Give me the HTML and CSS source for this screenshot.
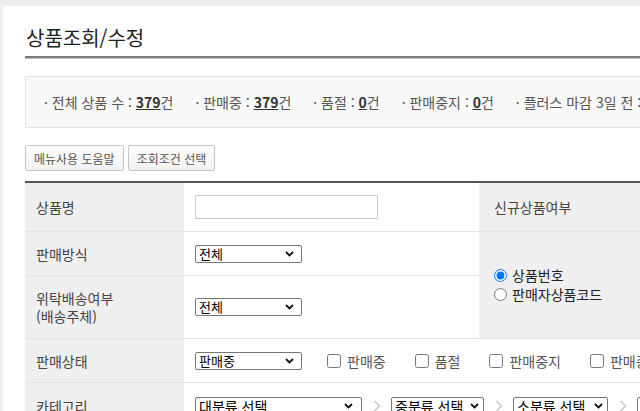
FILE: index.html
```html
<!DOCTYPE html>
<html lang="ko">
<head>
  <meta charset="UTF-8" />
  <meta name="viewport" content="width=device-width, initial-scale=1.0"/>
  <title>상품조회/수정</title>
  <link rel="stylesheet" href="styles.css">
</head>
<body>
  <div class="page">
    <h1 class="page-title">상품조회/수정</h1>

    <div class="summary">
      <span class="sum-item">· 전체 상품 수 : <a class="num">379</a>건</span>
      <span class="sum-item">· 판매중 : <a class="num">379</a>건</span>
      <span class="sum-item">· 품절 : <a class="num">0</a>건</span>
      <span class="sum-item">· 판매중지 : <a class="num">0</a>건</span>
      <span class="sum-item">· 플러스 마감 3일 전 : <a class="num">0</a>건</span>
    </div>

    <div class="btn-row">
      <button class="btn">메뉴사용 도움말</button>
      <button class="btn">조회조건 선택</button>
    </div>

    <table class="search">
      <colgroup>
        <col class="c-label">
        <col class="c-value">
        <col class="c-label2">
        <col>
      </colgroup>
      <tr class="r1">
        <th>상품명</th>
        <td><input type="text" class="txt"></td>
        <th class="lbl2">신규상품여부</th>
        <td></td>
      </tr>
      <tr class="r2">
        <th>판매방식</th>
        <td>
          <div class="sel sel-a" role="combobox"><span class="sel-txt">전체</span><svg class="caret" width="9" height="6" viewBox="0 0 9 6"><polyline points="1,1 4.5,4.5 8,1" fill="none" stroke="#111" stroke-width="1.8"/></svg></div>
        </td>
        <th rowspan="2" class="lbl2 radio-cell">
          <label class="radio-opt"><input type="radio" name="code" checked> 상품번호</label>
          <label class="radio-opt"><input type="radio" name="code"> 판매자상품코드</label>
        </th>
        <td rowspan="2"></td>
      </tr>
      <tr class="r3">
        <th>위탁배송여부<br>(배송주체)</th>
        <td>
          <div class="sel sel-a" role="combobox"><span class="sel-txt">전체</span><svg class="caret" width="9" height="6" viewBox="0 0 9 6"><polyline points="1,1 4.5,4.5 8,1" fill="none" stroke="#111" stroke-width="1.8"/></svg></div>
        </td>
      </tr>
      <tr class="r4">
        <th>판매상태</th>
        <td colspan="3">
          <div class="line">
            <div class="sel sel-a" role="combobox"><span class="sel-txt">판매중</span><svg class="caret" width="9" height="6" viewBox="0 0 9 6"><polyline points="1,1 4.5,4.5 8,1" fill="none" stroke="#111" stroke-width="1.8"/></svg></div>
            <label class="chk chk-first"><input type="checkbox"> 판매중</label>
            <label class="chk"><input type="checkbox"> 품절</label>
            <label class="chk"><input type="checkbox"> 판매중지</label>
            <label class="chk"><input type="checkbox"> 판매종료</label>
          </div>
        </td>
      </tr>
      <tr class="r5">
        <th>카테고리</th>
        <td colspan="3">
          <div class="line">
            <div class="sel sel-cat sel-b" role="combobox"><span class="sel-txt">대분류 선택</span><svg class="caret" width="9" height="6" viewBox="0 0 9 6"><polyline points="1,1 4.5,4.5 8,1" fill="none" stroke="#111" stroke-width="1.8"/></svg></div>
            <svg class="arr" width="8" height="12" viewBox="0 0 8 12"><polyline points="1.5,1 6.5,6 1.5,11" fill="none" stroke="#c4c4c4" stroke-width="1.3"/></svg>
            <div class="sel sel-cat sel-c" role="combobox"><span class="sel-txt">중분류 선택</span><svg class="caret" width="9" height="6" viewBox="0 0 9 6"><polyline points="1,1 4.5,4.5 8,1" fill="none" stroke="#111" stroke-width="1.8"/></svg></div>
            <svg class="arr" width="8" height="12" viewBox="0 0 8 12"><polyline points="1.5,1 6.5,6 1.5,11" fill="none" stroke="#c4c4c4" stroke-width="1.3"/></svg>
            <div class="sel sel-cat sel-d" role="combobox"><span class="sel-txt">소분류 선택</span><svg class="caret" width="9" height="6" viewBox="0 0 9 6"><polyline points="1,1 4.5,4.5 8,1" fill="none" stroke="#111" stroke-width="1.8"/></svg></div>
            <svg class="arr" width="8" height="12" viewBox="0 0 8 12"><polyline points="1.5,1 6.5,6 1.5,11" fill="none" stroke="#c4c4c4" stroke-width="1.3"/></svg>
            <div class="sel sel-cat sel-d" role="combobox"><span class="sel-txt">세분류 선택</span><svg class="caret" width="9" height="6" viewBox="0 0 9 6"><polyline points="1,1 4.5,4.5 8,1" fill="none" stroke="#111" stroke-width="1.8"/></svg></div>
          </div>
        </td>
      </tr>
    </table>
  </div>
</body>
</html>
```

FILE: styles.css
```css
html, body {
  overflow: hidden;
}
body {
  margin: 0;
  background: #eeeeee;
  font-family: "Noto Sans CJK KR", "Noto Sans", sans-serif;
  color: #333;
}
.page {
  margin: 6px 0 0 3px;
  background: #fff;
  padding: 0 22px 40px;
  width: 1000px;
}
.page-title {
  margin: 0;
  padding: 19px 0 6px 1px;
  font-size: 20px;
  line-height: 25px;
  font-weight: normal;
  color: #222;
  border-bottom: 2px solid #7b7b7b;
  box-shadow: 0 1px 0 #c4c4c4;
}

/* summary box */
.summary {
  margin-top: 18px;
  height: 50px;
  line-height: 50px;
  border: 1px solid #e2e2e2;
  background: #f8f8f8;
  padding: 0 18px;
  font-size: 14px;
  color: #555;
  white-space: nowrap;
}
.sum-item {
  margin-right: 18px;
}
.num {
  font-weight: bold;
  text-decoration: underline;
  color: #333;
}

/* buttons */
.btn-row {
  margin-top: 17px;
  display: flex;
  gap: 4px;
}
.btn {
  height: 26px;
  padding: 0 8px;
  font-family: inherit;
  font-size: 12px;
  color: #555;
  background: linear-gradient(#ffffff, #f1f1f1);
  border: 1px solid #c4c4c4;
  border-radius: 2px;
}

/* search table */
.search {
  margin-top: 10px;
  border-collapse: collapse;
  border-top: 2px solid #555;
  width: 900px;
  table-layout: fixed;
  font-size: 14px;
}
.c-label { width: 159px; }
.c-value { width: 295px; }
.c-label2 { width: 170px; }
.search th {
  background: #efefef;
  font-weight: normal;
  text-align: left;
  padding: 0 11px;
  color: #444;
  line-height: 18px;
  border-bottom: 1px solid #e2e2e2;
}
.search td {
  padding: 0 11px;
  border-bottom: 1px solid #e2e2e2;
}
.search th.lbl2 {
  padding-left: 15px;
}
.r1 th { height: 48px; }
.r2 th { height: 43px; }
.r3 th { height: 62px; }
.r4 th { height: 43px; }
.r5 th { height: 45px; }

.txt {
  box-sizing: border-box;
  width: 183px;
  height: 24px;
  border: 1px solid #ccc;
  margin: 0;
}

/* drop-down boxes */
.sel {
  box-sizing: border-box;
  display: flex;
  align-items: center;
  justify-content: space-between;
  height: 18px;
  padding: 0 7px 0 3px;
  border: 1px solid #767676;
  border-radius: 2px;
  background: #fff;
  font-size: 13px;
  line-height: 16px;
  color: #000;
  overflow: hidden;
  flex: none;
}
.sel-txt {
  white-space: nowrap;
}
.caret {
  flex: none;
}
.sel-cat {
  font-size: 14px;
  padding-right: 4px;
}
.sel-a { width: 107px; }
.sel-b { width: 167px; padding-right: 8px; }
.sel-c { width: 93px; }
.sel-d { width: 95px; }

.line {
  display: flex;
  align-items: center;
  white-space: nowrap;
}
.chk {
  display: inline-flex;
  align-items: center;
  gap: 6px;
  margin-left: 29px;
  color: #555;
}
.chk-first {
  margin-left: 25px;
}
.chk input {
  margin: 0;
  width: 14px;
  height: 14px;
}
.arr {
  margin: 0 10px 0 11px;
  flex: none;
}

.radio-opt {
  display: flex;
  align-items: center;
  gap: 5px;
  height: 19px;
  line-height: 19px;
  color: #222;
}
.radio-opt input {
  margin: 0;
}
```
